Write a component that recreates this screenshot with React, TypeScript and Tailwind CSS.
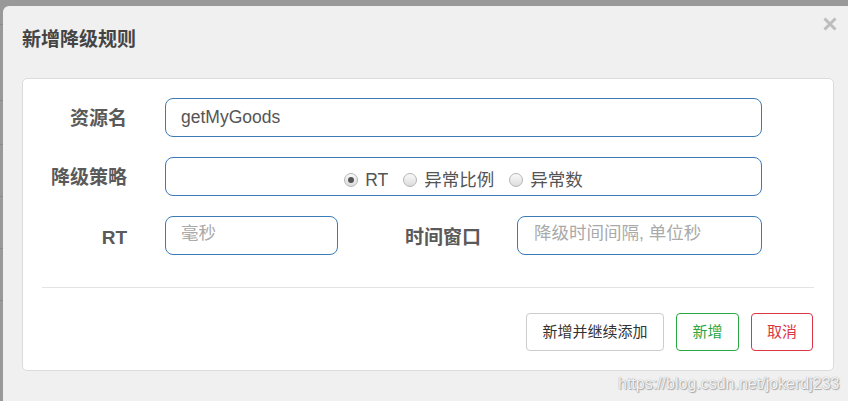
import React from "react";

const font = { fontFamily: '"Liberation Sans", "Noto Sans CJK SC", sans-serif' };

function Radio({ checked, label }: { checked?: boolean; label: string }) {
  return (
    <span className="flex items-center">
      <span className="flex h-[14px] w-[14px] items-center justify-center rounded-full border border-[#b5b5b5] bg-gradient-to-b from-[#fafafa] to-[#dcdcdc]">
        {checked && <span className="h-[6px] w-[6px] rounded-full bg-[#555]" />}
      </span>
      <span className="ml-[7px] text-[17.5px] text-[#555]">{label}</span>
    </span>
  );
}

export default function App() {
  return (
    <div className="relative flex h-[401px] w-[848px] overflow-hidden bg-[#999]" style={font}>
      {/* background page strip on the left */}
      <div className="flex w-[3px] shrink-0 flex-col pt-[24px]">
        <div className="h-[76px] border-t border-[#8a8a8a]" />
        <div className="h-[44px] border-t border-[#8a8a8a]" />
        <div className="h-[52px] border-t border-[#8a8a8a]" />
        <div className="h-[52px] border-t border-[#8a8a8a]" />
        <div className="h-[52px] border-t border-[#8a8a8a]" />
        <div className="border-t border-[#8a8a8a]" />
      </div>

      {/* modal */}
      <div className="mt-[6px] flex flex-1 flex-col rounded-tl-[6px] bg-[#f0f0f0]">
        <div className="flex h-[72px] items-start justify-between pl-[19px] pr-[11px]">
          <div className="mt-[22px] text-[19px] font-bold leading-[24px] text-[#444]">新增降级规则</div>
          <svg className="mt-[11px]" width="14" height="14" viewBox="0 0 14 14">
            <path d="M1.5 1.5 L12.5 12.5 M12.5 1.5 L1.5 12.5" stroke="#bdbdbd" strokeWidth="3" strokeLinecap="butt" />
          </svg>
        </div>

        <div className="ml-[19px] w-[812px] rounded-[5px] border border-[#dcdcdc] bg-white pb-[19px] pt-[19px]">
          <div className="flex flex-col gap-[20px]">
            <div className="flex h-[39px] items-center">
              <div className="w-[104px] pt-[4px] text-right text-[19px] font-bold text-[#5a5a5a]">资源名</div>
              <div className="ml-[38px] flex h-[39px] w-[597px] items-center rounded-[8px] border border-[#3a7bb8] px-[15px] text-[17.5px] text-[#555]">
                getMyGoods
              </div>
            </div>
            <div className="flex h-[39px] items-center">
              <div className="w-[104px] pt-[4px] text-right text-[19px] font-bold text-[#5a5a5a]">降级策略</div>
              <div className="ml-[38px] flex h-[39px] w-[597px] items-center justify-center gap-[15px] rounded-[8px] border border-[#3a7bb8] pt-[7px]">
                <Radio checked label="RT" />
                <Radio label="异常比例" />
                <Radio label="异常数" />
              </div>
            </div>
            <div className="flex h-[39px] items-center">
              <div className="w-[104px] pt-[5px] text-right text-[19px] font-bold text-[#5a5a5a]">RT</div>
              <div className="ml-[38px] flex h-[39px] w-[173px] items-center rounded-[8px] border border-[#3a7bb8] px-[15px] pb-[4px] text-[17.5px] text-[#aaa]">
                毫秒
              </div>
              <div className="w-[143px] pt-[5px] text-right text-[19px] font-bold text-[#5a5a5a]">时间窗口</div>
              <div className="ml-[36px] flex h-[39px] w-[245px] items-center rounded-[8px] border border-[#3a7bb8] px-[16px] pb-[4px] text-[17.5px] text-[#aaa]">
                降级时间间隔, 单位秒
              </div>
            </div>
          </div>

          <div className="mx-[19px] mt-[32px] border-t border-[#e3e3e3]" />

          <div className="mt-[25px] flex justify-end gap-[12px] pr-[20px]">
            <div className="flex h-[38px] w-[138px] items-center justify-center rounded-[4px] border border-[#cccccc] text-[15px] text-[#333]">
              新增并继续添加
            </div>
            <div className="flex h-[38px] w-[63px] items-center justify-center rounded-[4px] border border-[#28a745] text-[15px] text-[#28a745]">
              新增
            </div>
            <div className="flex h-[38px] w-[62px] items-center justify-center rounded-[4px] border border-[#dc3545] text-[15px] text-[#dc3545]">
              取消
            </div>
          </div>
        </div>
      </div>

      {/* watermark */}
      <div
        className="absolute left-[618px] top-[372px] text-[16px] text-white/90"
        style={{ fontFamily: '"Liberation Sans", sans-serif', textShadow: "0 0 1px #888, 1px 1px 1px #aaa" }}
      >
        https://blog.csdn.net/jokerdj233
      </div>
    </div>
  );
}
